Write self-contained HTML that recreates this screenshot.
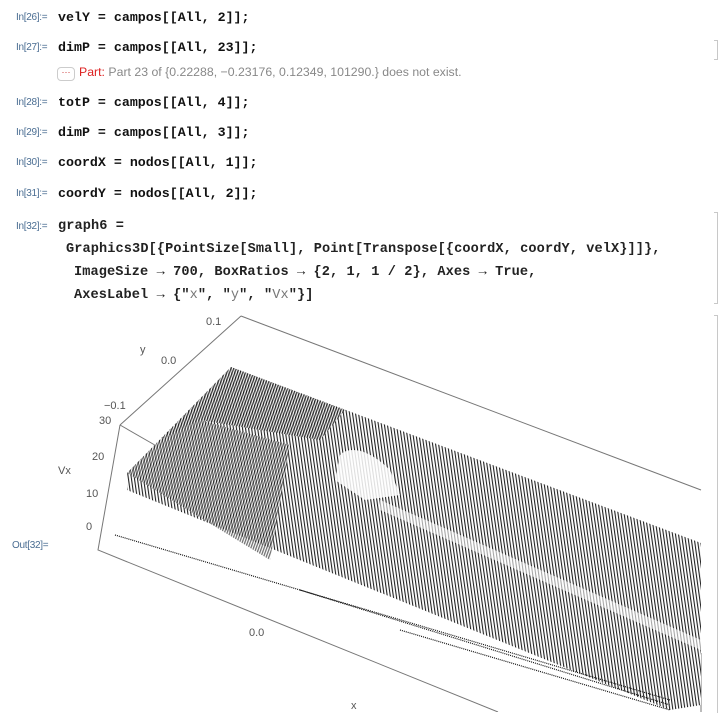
<!DOCTYPE html>
<html><head><meta charset="utf-8"><style>
body{margin:0;width:720px;height:712px;background:#fff;position:relative;overflow:hidden;font-family:"Liberation Sans",sans-serif}
.lab{position:absolute;left:16px;font-size:10px;color:#4a6d92;font-family:"Liberation Sans",sans-serif;letter-spacing:-0.3px}
.code{position:absolute;left:58px;font-family:"Liberation Mono",monospace;font-weight:bold;font-size:13.3px;color:#111;white-space:pre}
.c2{font-weight:bold;font-size:13.6px;letter-spacing:0.1px;color:#222}
.br{position:absolute;border:1px solid #c8c8c8;border-left:none;width:3px}
.s{color:#777;font-weight:normal}
</style></head><body>
<div class="lab" style="top:12px">In[26]:=</div><div class="code" style="top:10px">velY = campos[[All, 2]];</div>
<div class="lab" style="top:42px">In[27]:=</div><div class="code" style="top:40px">dimP = campos[[All, 23]];</div>
<div style="position:absolute;left:57px;top:67px;width:16px;height:12px;border:1px solid #ccc;border-radius:4px;color:#c33;font-size:9px;line-height:8px;text-align:center">···</div>
<div style="position:absolute;left:79px;top:65px;font-size:12.3px;color:#888;white-space:pre"><span style="color:#d22">Part:</span> Part 23 of {0.22288, −0.23176, 0.12349, 101290.} does not exist.</div>
<div class="lab" style="top:97px">In[28]:=</div><div class="code" style="top:95px">totP = campos[[All, 4]];</div>
<div class="lab" style="top:127px">In[29]:=</div><div class="code" style="top:125px">dimP = campos[[All, 3]];</div>
<div class="lab" style="top:157px">In[30]:=</div><div class="code" style="top:155px">coordX = nodos[[All, 1]];</div>
<div class="lab" style="top:188px">In[31]:=</div><div class="code" style="top:186px">coordY = nodos[[All, 2]];</div>
<div class="lab" style="top:221px">In[32]:=</div><div class="code c2" style="top:219px">graph6 =</div>
<div class="code c2" style="top:242px;left:66px">Graphics3D[{PointSize[Small], Point[Transpose[{coordX, coordY, velX}]]},</div>
<div class="code c2" style="top:265px;left:74px">ImageSize → 700, BoxRatios → {2, 1, 1 / 2}, Axes → True,</div>
<div class="code c2" style="top:288px;left:74px">AxesLabel → {"<span class="s">x</span>", "<span class="s">y</span>", "<span class="s">Vx</span>"}]</div>
<div class="lab" style="top:540px;left:12px">Out[32]=</div>
<div class="br" style="left:714px;top:40px;height:18px"></div>
<div class="br" style="left:714px;top:212px;height:90px"></div>
<div class="br" style="left:714px;top:315px;height:397px;border-bottom:none"></div>
<svg style="position:absolute;left:0;top:0" width="720" height="712">
<defs>
<pattern id="p" width="3" height="3" patternUnits="userSpaceOnUse" patternTransform="rotate(-8)"><rect width="3" height="3" fill="#fff"/><rect width="1.1" height="3" fill="#222"/></pattern>
<pattern id="q" width="2.5" height="3" patternUnits="userSpaceOnUse" patternTransform="rotate(20)"><rect width="2.5" height="3" fill="#fff"/><rect width="1.3" height="3" fill="#111"/></pattern>
</defs>
<g stroke="#777" stroke-width="1" fill="none">
<path d="M241,316 L701,490"/><path d="M241,316 L120,425"/><path d="M120,425 L98,550 L498,712"/><path d="M120,425 L160,448"/>
<path d="M701,653 L701,712"/>
</g>
<polygon points="231,367 701,543 701,705 670,710 127,490 127,473" fill="url(#p)"/>
<polygon points="231,367 345,410 320,440 200,420 160,440" fill="url(#q)" opacity="0.8"/>
<polygon points="127,473 160,440 200,420 290,445 270,560" fill="url(#q)" opacity="0.6"/>
<path d="M340,455 C350,445 370,450 390,470 L400,495 L365,500 L335,480 Z" fill="#fff" opacity="0.85"/>
<path d="M380,500 L701,640 L701,650 L380,510 Z" fill="#fff" opacity="0.6"/>
<g stroke="#111" stroke-width="1.2" fill="none" stroke-dasharray="1 1">
<path d="M115,535 L670,700"/><path d="M300,590 L670,705"/><path d="M400,630 L670,710"/>
</g>
<g font-family="Liberation Sans,sans-serif" font-size="11" fill="#555">
<text x="206" y="325">0.1</text><text x="161" y="364">0.0</text><text x="140" y="353">y</text>
<text x="104" y="409">−0.1</text><text x="99" y="424">30</text><text x="92" y="460">20</text>
<text x="58" y="474">Vx</text><text x="86" y="497">10</text><text x="86" y="530">0</text>
<text x="249" y="636">0.0</text><text x="351" y="709">x</text>
</g>
</svg>
</body></html>
